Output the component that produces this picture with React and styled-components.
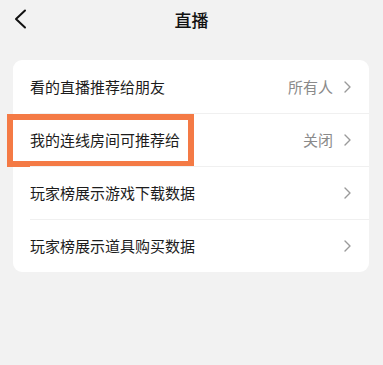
import React from "react";
import styled, { createGlobalStyle } from "styled-components";

const Global = createGlobalStyle`
  html, body { margin: 0; padding: 0; background: #f2f2f2; }
  body { font-family: "Noto Sans CJK SC", "Noto Sans", sans-serif; }
`;

const Page = styled.div`
  width: 383px;
  height: 365px;
  background: #f2f2f2;
  overflow: hidden;
`;

const Header = styled.header`
  position: relative;
  height: 38px;
  display: flex;
  align-items: center;
  justify-content: center;
`;

const BackButton = styled.div`
  position: absolute;
  left: 13px;
  top: 9px;
  width: 14px;
  height: 20px;
  display: flex;
`;

const Title = styled.h1`
  margin: 0;
  font-size: 17px;
  font-weight: 500;
  color: #111;
  line-height: 1;
`;

const Card = styled.div`
  margin: 22px 14px 0 13px;
  background: #fff;
  border-radius: 9px;
  display: flex;
  flex-direction: column;
`;

const Row = styled.div`
  position: relative;
  height: 53px;
  display: flex;
  align-items: center;
  padding: 0 18px 0 17px;
  box-sizing: border-box;
  &::before {
    content: "";
    display: ${(p) => (p.$first ? "none" : "block")};
    position: absolute;
    top: 0;
    left: 17px;
    right: 0;
    height: 1px;
    background: #f0f0f0;
  }
`;

const Label = styled.span`
  flex: 1;
  font-size: 15px;
  color: #1c1c1c;
`;

const Value = styled.span`
  font-size: 15px;
  color: #8a8a8a;
  margin-right: 11px;
`;

const Highlight = styled.div`
  position: absolute;
  left: -6px;
  top: 1px;
  width: 187px;
  height: 53px;
  border: 6.5px solid #f47a45;
  box-sizing: border-box;
  pointer-events: none;
`;

const Chevron = () => (
  <svg width="7" height="12" viewBox="0 0 7 12">
    <polyline points="1,1 6,6 1,11" fill="none" stroke="#9a9a9a" strokeWidth="1.4" strokeLinecap="round" strokeLinejoin="round" />
  </svg>
);

const rows = [
  { label: "看的直播推荐给朋友", value: "所有人" },
  { label: "我的连线房间可推荐给", value: "关闭", highlight: true },
  { label: "玩家榜展示游戏下载数据" },
  { label: "玩家榜展示道具购买数据" },
];

export default function App() {
  return (
    <Page>
      <Global />
      <Header>
        <BackButton>
          <svg width="14" height="20" viewBox="0 0 14 20">
            <polyline points="12,1.5 3,10 12,18.5" fill="none" stroke="#111" strokeWidth="2" strokeLinecap="round" strokeLinejoin="round" />
          </svg>
        </BackButton>
        <Title>直播</Title>
      </Header>
      <Card>
        {rows.map((r, i) => (
          <Row key={i} $first={i === 0}>
            <Label>{r.label}</Label>
            {r.value && <Value>{r.value}</Value>}
            <Chevron />
            {r.highlight && <Highlight />}
          </Row>
        ))}
      </Card>
    </Page>
  );
}
